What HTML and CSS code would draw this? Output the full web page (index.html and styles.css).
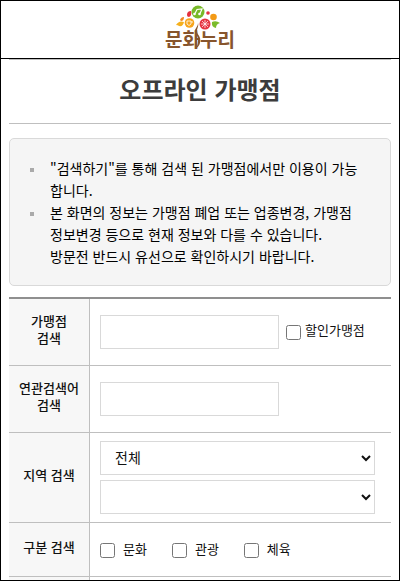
FILE: index.html
```html
<!DOCTYPE html>
<html lang="ko">
<head>
<meta charset="utf-8">
<meta name="viewport" content="width=device-width, initial-scale=1">
<title>오프라인 가맹점</title>
<link rel="stylesheet" href="styles.css">
</head>
<body>
<header class="site-header">
  <a class="logo" href="#" aria-label="문화누리">
    <svg width="72" height="54" viewBox="0 0 72 54">
      <text class="logo-text" x="1" y="46">문화누리</text>
      <path d="M34 22C34 26 30 28 31 31C32 34 35 36 34 40C34 43 33 46 31 48C35 46 37 42 36 37C35 34 33 33 33 30C33 27 35 25 34 22Z" fill="#87552c"/>
      <circle cx="34" cy="11" r="6.5" fill="#78b928"/>
      <path d="M31 12.500L33 8.500L38 8L36 12.500" fill="none" stroke="#fff" stroke-width="1.200"/>
      <circle cx="30.500" cy="13" r="1.300" fill="#fff"/>
      <circle cx="35.500" cy="13" r="1.300" fill="#fff"/>
      <circle cx="25.500" cy="22" r="4.800" fill="#f7a51c"/>
      <path d="M23 20H27V23Q25 26 23 23ZM27 21H29" fill="none" stroke="#fff" stroke-width=".8"/>
      <circle cx="41" cy="23" r="5.500" fill="#e63442"/>
      <path d="M38 20L44 26M44 20L38 26M37 23H45M41 19V27" fill="none" stroke="#fff" stroke-width=".7"/>
      <circle cx="49.500" cy="16" r="3.300" fill="#f39a16"/>
      <circle cx="44" cy="12" r="1.800" fill="#e4313f"/>
      <path d="M23 14Q23 10 27 10Q28 15 25 16Q23 16 23 14Z" fill="#e4313f"/>
      <path d="M12 24Q15 19 20 21Q19 26 15 25Q14 24 12 24Z" fill="#f5b01d"/>
      <path d="M16 19Q17 16 20 16Q20 20 17 20Z" fill="#f08a20"/>
      <path d="M48 21Q52 19 56 22Q52 23 52 27Q47 26 48 21Z" fill="#7bbb2b"/>
    </svg>
  </a>
</header>
<main class="content">
  <h1 class="page-title">오프라인 가맹점</h1>
  <ul class="notice">
    <li>"검색하기"를 통해 검색 된 가맹점에서만 이용이 가능합니다.</li>
    <li>본 화면의 정보는 가맹점 폐업 또는 업종변경, 가맹점 정보변경 등으로 현재 정보와 다를 수 있습니다.<br>방문전 반드시 유선으로 확인하시기 바랍니다.</li>
  </ul>
  <form>
    <table class="search-table">
      <tbody>
        <tr class="row-text">
          <th scope="row"><label for="store">가맹점<br>검색</label></th>
          <td>
            <div class="field">
              <input class="text-box" type="text" id="store">
              <label class="discount"><input type="checkbox"><span>할인가맹점</span></label>
            </div>
          </td>
        </tr>
        <tr class="row-text">
          <th scope="row"><label for="related">연관검색어<br>검색</label></th>
          <td><div class="field"><input class="text-box" type="text" id="related"></div></td>
        </tr>
        <tr class="row-region">
          <th scope="row"><label for="region">지역 검색</label></th>
          <td>
            <div class="selects">
              <select id="region"><option>전체</option></select>
              <select aria-label="세부 지역"><option></option></select>
            </div>
          </td>
        </tr>
        <tr class="row-kind">
          <th scope="row">구분 검색</th>
          <td>
            <div class="kinds">
              <label><input type="checkbox"><span>문화</span></label>
              <label><input type="checkbox"><span>관광</span></label>
              <label><input type="checkbox"><span>체육</span></label>
            </div>
          </td>
        </tr>
        <tr class="row-end"><th></th><td></td></tr>
      </tbody>
    </table>
  </form>
</main>
</body>
</html>
```
FILE: styles.css
```css
* {
  box-sizing: border-box;
}

body {
  margin: 0;
  min-height: 100vh;
  border: 1px solid #000;
  background: #fff;
  color: #111;
  font-family: "Noto Sans CJK KR", sans-serif;
  font-size: 14px;
  line-height: 22px;
}

.site-header {
  display: flex;
  justify-content: center;
  height: 58px;
  border-bottom: 1px solid #000;
}

.logo,
.logo svg {
  display: block;
}

.logo-text {
  fill: #87552c;
  font-size: 19px;
  font-weight: 700;
}

.content {
  padding: 0 8px;
}

.page-title {
  margin: 0 0 14px;
  padding: 11px 0 16px;
  border-top: 1px solid #bfbfbf;
  border-bottom: 1px solid #bfbfbf;
  color: #3c3c3c;
  font-size: 24px;
  font-weight: 700;
  line-height: 36px;
  text-align: center;
}

.notice {
  margin: 0 0 11px;
  padding: 18px 32px 18px 20px;
  border: 1px solid #d9d9d9;
  border-radius: 5px;
  background: #f5f5f5;
  color: #000;
  list-style: none;
}

.notice li {
  display: flow-root;
  padding-left: 20px;
  background: linear-gradient(#aaa, #aaa) 0 11px / 4px 4px no-repeat;
}

.search-table {
  width: 100%;
  border-top: 2px solid #8f8f8f;
  border-spacing: 0;
  table-layout: fixed;
}

.search-table th {
  width: 81px;
  padding: 0 0 6px;
  border-right: 1px solid #bfbfbf;
  border-bottom: 1px solid #bfbfbf;
  background: #f7f7f7;
  font-size: 13px;
  font-weight: 500;
  line-height: 17px;
}

.search-table td {
  padding: 0 16px 0 10px;
  border-bottom: 1px solid #bfbfbf;
  font-size: 13px;
}

.row-text {
  height: 67px;
}

.row-region {
  height: 90px;
}

.row-kind {
  height: 54px;
}

.search-table .row-end > * {
  height: 3px;
  padding: 0;
  border-bottom: 0;
}

input[type="checkbox"] {
  flex: none;
  width: 15px;
  height: 15px;
  margin: 0;
}

.field {
  display: flex;
  align-items: center;
  gap: 7px;
}

.text-box,
select {
  height: 34px;
  border: 1px solid #d9d9d9;
  border-radius: 0;
  background: #fff;
  color: #111;
  font: inherit;
}

.text-box {
  width: 179px;
  padding: 0 8px;
}

.discount,
.kinds label {
  display: flex;
  align-items: center;
  gap: 4px;
}

.discount span,
.kinds span {
  padding-bottom: 4px;
}

.selects {
  display: grid;
  gap: 5px;
}

select {
  width: 100%;
  padding: 0 0 2px 10px;
  font-size: 14px;
}

.kinds {
  display: flex;
  gap: 25px;
  padding-top: 2px;
}

.kinds label {
  gap: 8px;
}
```
